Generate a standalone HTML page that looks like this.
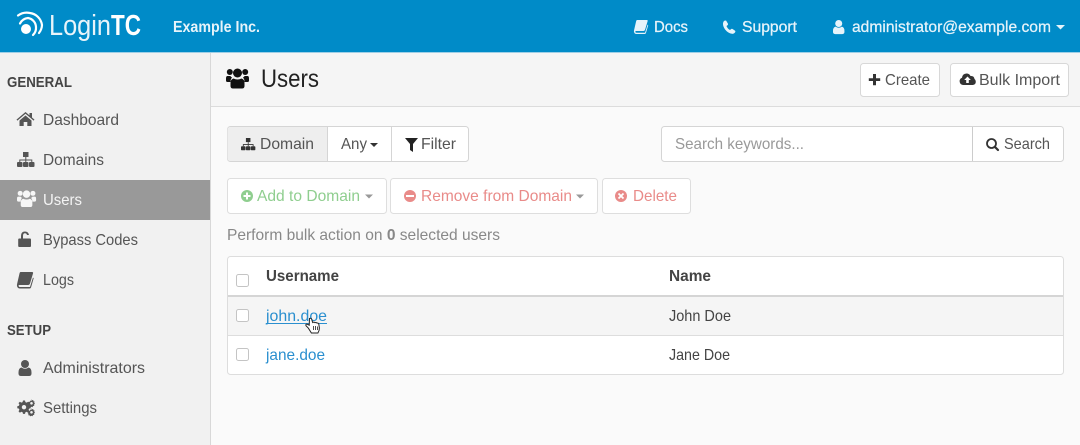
<!DOCTYPE html>
<html lang="en"><head><meta charset="utf-8"><title>LoginTC Users</title>
<style>
html,body{margin:0;padding:0;width:1080px;height:445px;overflow:hidden;background:#fafafa}
svg{display:block;filter:blur(.3px)}
text{font-family:"Liberation Sans",sans-serif;font-size:16px;fill:#555}
.b{font-weight:bold}
</style></head><body>
<svg width="1080" height="445" viewBox="0 0 1080 445" xmlns="http://www.w3.org/2000/svg">
<defs>
<g id="users"><circle cx="3.800" cy="4" r="3"/><circle cx="19.200" cy="4" r="3"/><circle cx="11.500" cy="5" r="4.500"/><path d="M0 10.500q0-2.500 1.500-2.500h2.800q.8 1 1.700 1.500-1.500 1.500-1.500 4.500H1.500Q0 14 0 12.500zM23 10.500q0-2.500-1.500-2.500h-2.800q-.8 1-1.700 1.500 1.500 1.500 1.500 4.500h3q1.500 0 1.500-1.500zM7.500 10.500q4 2 8 0 3 .8 3 4.500v3q0 2.500-2.500 2.500H7q-2.500 0-2.500-2.500v-3q0-3.700 3-4.500z"/></g>
<g id="sitemap"><rect x="6" y="0" width="5.500" height="5"/><rect x="0" y="10" width="5.500" height="5" rx="1"/><rect x="6" y="10" width="5.500" height="5" rx="1"/><rect x="12" y="10" width="5.500" height="5" rx="1"/><path d="M8.300 5h1v2.500h6v2.500h-1V8.500h-5V10h-1V8.500h-5V10h-1V7.500h6z"/></g>
<g id="book"><path d="M3.500 0H15q1.500 0 1 1.500l-3 10q-.500 1.500-2 1.500H2.500Q1.200 13 1.700 14.200q.3.800 1.300.8H13l3-9.500.7.800L14 15.500q-.3 1-1.500 1H3Q.5 16.500 0 14q-.2-1 .2-2.500L2.500 1.500Q2.800 0 3.500 0z"/></g>
<g id="person"><circle cx="6.500" cy="4" r="4"/><path d="M3 7.500q3.500 2.500 7 0 3 .5 3 5v1q0 2.500-2.500 2.500h-8Q0 16 0 13.500v-1q0-4.500 3-5z"/></g>
<g id="gear"><path d="M6.500 1.500h2l.4 1.600 1.300.5 1.400-.9 1.400 1.400-.9 1.400.5 1.300 1.600.4v2l-1.600.4-.5 1.300.9 1.400-1.400 1.400-1.400-.9-1.300.5-.4 1.600h-2l-.4-1.600-1.300-.5-1.400.9-1.400-1.400.9-1.400-.5-1.300L.8 9.200v-2l1.600-.4.5-1.300L2 4.100l1.400-1.400 1.400.9 1.300-.5zM7.500 6a2.200 2.200 0 1 0 0 4.400 2.200 2.200 0 0 0 0-4.400z" fill-rule="evenodd"/></g>
</defs>

<!-- header -->
<rect width="1080" height="52" fill="#008bc8"/>
<rect y="52" width="1080" height="1" fill="#9fcfe6"/>
<!-- logo -->
<g fill="none" stroke="#fff">
<circle cx="26" cy="29" r="5" fill="#fff" stroke="none"/>
<path d="M20 23.500a10 10 0 0 1 8-5.500 9.500 9.500 0 0 1 8 9 10 10 0 0 1-3 8" stroke-width="2.200" stroke-linecap="round"/>
<path d="M18 15.500a15 15 0 0 1 12-2.500 14 14 0 0 1 12 12 14 14 0 0 1-3 8" stroke-width="2.200" stroke-linecap="round"/>
</g>
<text x="49" y="35" textLength="62" lengthAdjust="spacingAndGlyphs" style="font-size:29px;fill:#e8f4fa">Login</text>
<text x="111" y="35" textLength="30" lengthAdjust="spacingAndGlyphs" class="b" style="font-size:29px;fill:#fff">TC</text>
<text x="173" y="32" textLength="87" lengthAdjust="spacingAndGlyphs" class="b" style="font-size:15.500px;fill:#e6f3fa">Example Inc.</text>
<g fill="#e6f3fa">
<use href="#book" transform="translate(634 20) scale(.85)"/>
<path d="M724 21q1.500-1 2.200-.2l1.800 3q.3.800-.5 1.400l-1 .8q.8 2.500 3.500 4l1.200-1q.7-.5 1.400 0l2.500 1.700q.7.600-.1 1.800-1.200 1.500-3 1.300-3.800-.5-6.700-4-2.500-3.300-2.300-6.500.2-1.400 1-2.300z"/>
<use href="#person" transform="translate(833 20) scale(.88)"/>
<path d="M1056 25h9l-4.500 4.500z"/>
<text x="654" y="32" textLength="34" lengthAdjust="spacingAndGlyphs" stroke="#e6f3fa" stroke-width=".25" style="fill:#e6f3fa">Docs</text>
<text x="742" y="32" textLength="55" lengthAdjust="spacingAndGlyphs" stroke="#e6f3fa" stroke-width=".25" style="fill:#e6f3fa">Support</text>
<text x="852" y="32" textLength="199" lengthAdjust="spacingAndGlyphs" stroke="#e6f3fa" stroke-width=".25" style="fill:#e6f3fa">administrator@example.com</text>
</g>

<!-- sidebar -->
<rect y="53" width="210" height="392" fill="#f1f1f1"/>
<rect x="210" y="53" width="1" height="392" fill="#d8d8d8"/>
<rect y="180" width="210" height="40" fill="#999"/>
<text x="7" y="87" textLength="65" lengthAdjust="spacingAndGlyphs" class="b" style="font-size:15px;fill:#444">GENERAL</text>
<text x="7" y="335" textLength="44" lengthAdjust="spacingAndGlyphs" class="b" style="font-size:15px;fill:#444">SETUP</text>
<text x="43" y="125" textLength="76" lengthAdjust="spacingAndGlyphs">Dashboard</text>
<text x="43" y="165" textLength="61" lengthAdjust="spacingAndGlyphs">Domains</text>
<text x="43" y="205" textLength="39" lengthAdjust="spacingAndGlyphs" style="fill:#f4f4f4">Users</text>
<text x="43" y="245" textLength="95" lengthAdjust="spacingAndGlyphs">Bypass Codes</text>
<text x="43" y="285" textLength="31" lengthAdjust="spacingAndGlyphs">Logs</text>
<text x="43" y="373" textLength="102" lengthAdjust="spacingAndGlyphs">Administrators</text>
<text x="43" y="413" textLength="54" lengthAdjust="spacingAndGlyphs">Settings</text>
<g fill="#555">
<path d="M25.500 112l4 3.400V113h2.500v4.500l2.500 2.100-.9 1-8.100-6.800-8.100 6.800-.9-1zM25.500 115.500l6 5v5.500h-4.200v-4h-3.600v4h-4.200v-5.500z"/>
<use href="#sitemap" transform="translate(17 152)"/>
<path d="M21 238.500v-2.500q0-4.500 4-4.500 3.300 0 4 3.500h-2q-.500-1.700-2-1.700-2 0-2 2.700v2.500h7q1 0 1 1v6.500q0 1-1 1H19.200q-1 0-1-1V239.500q0-1 1-1z"/>
<use href="#book" transform="translate(17 272)"/>
<use href="#person" transform="translate(18.500 360)"/>
<use href="#gear" transform="translate(16.500 399)"/>
<path d="M31.500 399l.5 1.200 1.200-.2.300 1.200 1.200.4-.5 1.200.8 1-1 .8.300 1.200-1.300.3-.5 1.100-1.200-.5-1 .7-.7-1-1.300-.2.200-1.300-.9-.9 1-.8-.1-1.300 1.300-.2.600-1.200 1.100.6zM31.500 402a1.300 1.300 0 1 0 0 2.600 1.300 1.300 0 0 0 0-2.600z" fill-rule="evenodd"/>
<path d="M31.500 408l.5 1.200 1.200-.2.300 1.200 1.200.4-.5 1.200.8 1-1 .8.300 1.200-1.300.3-.5 1.100-1.200-.5-1 .7-.7-1-1.300-.2.200-1.300-.9-.9 1-.8-.1-1.300 1.300-.2.600-1.200 1.100.6zM31.500 411a1.300 1.300 0 1 0 0 2.600 1.300 1.300 0 0 0 0-2.600z" fill-rule="evenodd"/>
</g>
<use href="#users" fill="#f6f6f6" transform="translate(17 190) scale(.83)"/>

<!-- page header -->
<rect x="211" y="53" width="869" height="53" fill="#f5f5f5"/>
<rect x="211" y="106" width="869" height="1" fill="#dcdcdc"/>
<use href="#users" fill="#111" transform="translate(226 68)"/>
<text x="261" y="87" textLength="58" lengthAdjust="spacingAndGlyphs" style="font-size:25px;fill:#222">Users</text>
<g fill="#fff" stroke="#d8d8d8">
<rect x="860.500" y="63.500" width="79" height="33" rx="3"/>
<rect x="950.500" y="63.500" width="118" height="33" rx="3"/>
</g>
<path d="M873 74h3v4.200h4.200v2.800H876v4.200h-3V81h-4.200v-2.800H873z" fill="#333"/>
<text x="885" y="85" textLength="45" lengthAdjust="spacingAndGlyphs">Create</text>
<path d="M963 86a3.800 3.800 0 0 1-1-7.300q.5-4 4.500-4.200 2.800 0 4 2.500 3.500-.5 4 3 1.300.8 1.300 2.700 0 2.800-3 3.300zM967.500 77.500l-3.300 3.500h2v3h2.600v-3h2z" fill="#333" fill-rule="evenodd" transform="translate(0 -1)"/>
<text x="979" y="85" textLength="81" lengthAdjust="spacingAndGlyphs">Bulk Import</text>

<!-- filter group -->
<rect x="227.500" y="126.500" width="241" height="35" rx="3" fill="#fff" stroke="#d5d5d5"/>
<path d="M230.500 127H327v34h-96.500q-3 0-3-3v-28q0-3 3-3z" fill="#eee"/>
<path d="M327.500 127v34M391.500 127v34" stroke="#d5d5d5"/>
<use href="#sitemap" fill="#333" transform="translate(241 138) scale(.82)"/>
<text x="260" y="149" textLength="54" lengthAdjust="spacingAndGlyphs">Domain</text>
<text x="341" y="149" textLength="26" lengthAdjust="spacingAndGlyphs">Any</text>
<path d="M370 143h8l-4 4z" fill="#333"/>
<path d="M405 138h13l-5 6v8l-3-2v-6z" fill="#222"/>
<text x="421" y="149" textLength="35" lengthAdjust="spacingAndGlyphs">Filter</text>

<!-- search -->
<rect x="661.500" y="126.500" width="402" height="35" rx="3" fill="#fff" stroke="#d5d5d5"/>
<path d="M972.500 127v34" stroke="#ccc" stroke-width="1"/>
<text x="675" y="149" textLength="129" lengthAdjust="spacingAndGlyphs" style="fill:#999">Search keywords...</text>
<circle cx="991.500" cy="143.500" r="4.500" fill="none" stroke="#333" stroke-width="1.800"/>
<path d="M995 147l3 3" stroke="#333" stroke-width="2.200" stroke-linecap="round"/>
<text x="1004" y="149" textLength="46" lengthAdjust="spacingAndGlyphs">Search</text>

<!-- bulk -->
<g fill="#fff" stroke="#dedede">
<rect x="227.500" y="178.500" width="159" height="35" rx="3"/>
<rect x="390.500" y="178.500" width="207" height="35" rx="3"/>
<rect x="602.500" y="178.500" width="88" height="35" rx="3"/>
</g>
<circle cx="247" cy="196" r="6" fill="#8fce8f"/>
<path d="M246 192.500h2v2.500h2.500v2H248v2.500h-2V197h-2.500v-2h2.500z" fill="#fff"/>
<text x="257" y="201" textLength="103" lengthAdjust="spacingAndGlyphs" style="fill:#8fce8f">Add to Domain</text>
<path d="M365 194.500h8l-4 4z" fill="#999"/>
<circle cx="410" cy="196" r="6" fill="#e98b89"/>
<rect x="406" y="195" width="8" height="2" fill="#fff"/>
<text x="421" y="201" textLength="151" lengthAdjust="spacingAndGlyphs" style="fill:#e98b89">Remove from Domain</text>
<path d="M576 194.500h8l-4 4z" fill="#999"/>
<circle cx="621" cy="196" r="6" fill="#e98b89"/>
<path d="M618.500 193.500l5 5M623.500 193.500l-5 5" stroke="#fff" stroke-width="1.800"/>
<text x="633" y="201" textLength="44" lengthAdjust="spacingAndGlyphs" style="fill:#e98b89">Delete</text>
<text x="227" y="240" textLength="273" lengthAdjust="spacingAndGlyphs" style="fill:#888">Perform bulk action on <tspan class="b">0</tspan> selected users</text>

<!-- table -->
<rect x="227.500" y="256.500" width="836" height="118" rx="3" fill="#fff" stroke="#ddd"/>
<rect x="228" y="297" width="835" height="38" fill="#f5f5f5"/>
<rect x="228" y="295" width="835" height="2" fill="#d5d5d5"/>
<rect x="228" y="335" width="835" height="1" fill="#ddd"/>
<g fill="#fff" stroke="#c4c4c4" stroke-width="1">
<rect x="236.500" y="274.500" width="12" height="12" rx="2"/>
<rect x="236.500" y="309.500" width="12" height="12" rx="2"/>
<rect x="236.500" y="348.500" width="12" height="12" rx="2"/>
</g>
<text x="266" y="281" textLength="73" lengthAdjust="spacingAndGlyphs" class="b" style="fill:#444">Username</text>
<text x="669" y="281" textLength="42" lengthAdjust="spacingAndGlyphs" class="b" style="fill:#444">Name</text>
<text x="266" y="321" textLength="61" lengthAdjust="spacingAndGlyphs" style="fill:#2a8fcf">john.doe</text>
<rect x="266" y="323" width="61" height="1" fill="#2a8fcf"/>
<text x="266" y="360" textLength="59" lengthAdjust="spacingAndGlyphs" style="fill:#2a8fcf">jane.doe</text>
<text x="669" y="321" textLength="62" lengthAdjust="spacingAndGlyphs" style="fill:#444">John Doe</text>
<text x="669" y="360" textLength="61" lengthAdjust="spacingAndGlyphs" style="fill:#444">Jane Doe</text>
<!-- cursor -->
<path d="M309.500 318.500q1.700-.8 2.200.8l1 3.200q1.500-.8 2.300.2 1.300-.5 2 .4 1.300-.3 1.800 1l.6 3.900q0 2.700-1.500 5h-6.500l-3-4.800-2.400-2.500q-.6-1.500 1-1.700l2.200 1.200z" fill="#fff" stroke="#222" stroke-width="1"/>
<path d="M313.500 326v4M315.500 326v4M317.500 326.500v3.500" stroke="#222" stroke-width=".8"/>
</svg>
</body></html>
